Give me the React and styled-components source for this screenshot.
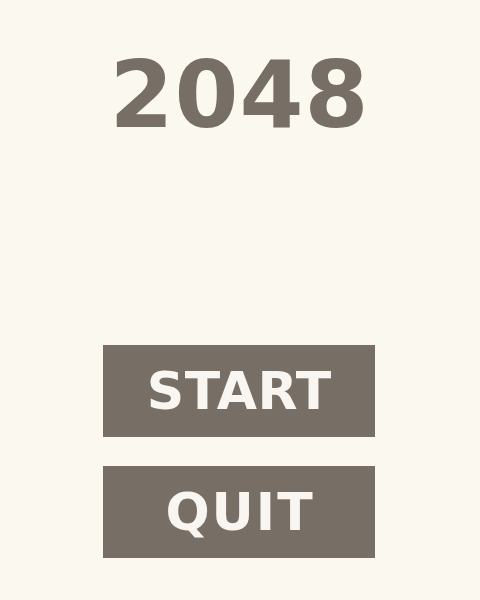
import React from 'react'
import styled, { createGlobalStyle } from 'styled-components'

const GlobalStyle = createGlobalStyle`
  html, body {
    margin: 0;
    padding: 0;
    background: #faf8ef;
  }
  body {
    font-family: 'DejaVu Sans', Verdana, sans-serif;
  }
`

const Menu = styled.div`
  display: flex;
  flex-direction: column;
  align-items: center;
  height: 600px;
  box-sizing: border-box;
  padding: 42px 2px 0 0;
`

const Title = styled.h1`
  margin: 0;
  height: 107px;
  padding-left: 1px;
  font-size: 92px;
  font-weight: bold;
  line-height: 107px;
  letter-spacing: 1px;
  color: #776e65;
`

const Buttons = styled.div`
  display: flex;
  flex-direction: column;
  gap: 29px;
  margin-top: 196px;
`

const MenuButton = styled.button`
  display: flex;
  align-items: center;
  justify-content: center;
  width: 272px;
  height: 92px;
  padding: 0 0 0 ${(p) => p.$spacing || 0}px;
  border: none;
  border-radius: 0;
  background: #776e65;
  color: #f9f6f2;
  font-family: 'DejaVu Sans', Verdana, sans-serif;
  font-size: 52px;
  font-weight: bold;
  letter-spacing: ${(p) => p.$spacing || 0}px;
  cursor: pointer;
`

const App = () => {
  return (
    <>
      <GlobalStyle />
      <Menu>
        <Title>2048</Title>
        <Buttons>
          <MenuButton $spacing={0.5}>START</MenuButton>
          <MenuButton $spacing={2}>QUIT</MenuButton>
        </Buttons>
      </Menu>
    </>
  )
}

export default App
